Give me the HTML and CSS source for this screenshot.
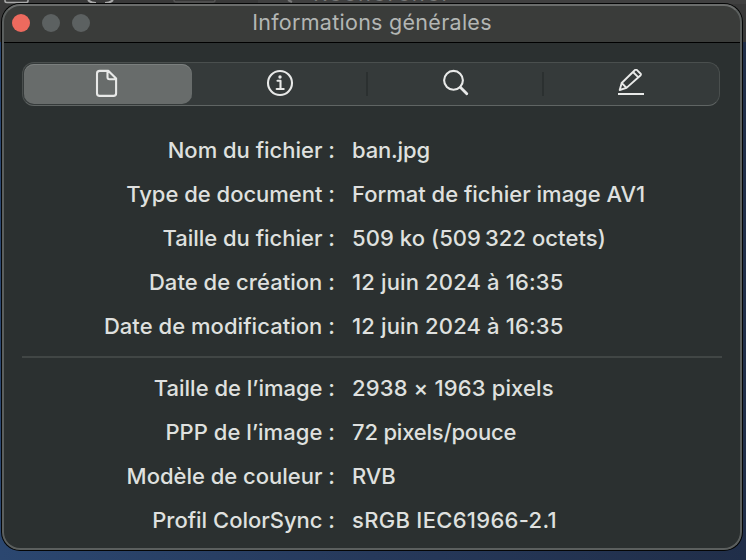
FILE: index.html
```html
<!DOCTYPE html>
<html lang="fr">
<head>
<meta charset="utf-8">
<title>Informations générales</title>
<link rel="stylesheet" href="styles.css">
</head>
<body>
<div class="backdrop" aria-hidden="true">
  <svg width="746" height="4" viewBox="0 0 746 4">
    <path d="M5 0v1q0 1.500 2 1.500h19q2 0 2-1.500V0" fill="none" stroke="#aaa" stroke-width="1.500"/>
    <path d="M88 0q3 3 8 3M113 0q-3 3-8 3" fill="none" stroke="#aaa" stroke-width="2"/>
    <path d="M174 0q0 2 2 2h37q2 0 2-2" fill="none" stroke="#555" stroke-width="1.500"/>
    <path d="M258 0h488v4H258z" fill="#484848" opacity=".5"/>
    <path d="M288 0l4 2" stroke="#777" stroke-width="2"/>
  </svg>
  <span class="behind">Rechercher</span>
</div>
<main class="window">
  <header class="titlebar">
    <div class="lights"><i class="light close"></i><i class="light"></i><i class="light"></i></div>
    <h1>Informations générales</h1>
  </header>
  <nav class="segments">
    <button class="segment active" aria-label="Général">
      <svg width="28" height="30" viewBox="0 0 28 30"><path d="M7 1.900h7.500l7.600 7.700v14.600q0 2.700-2.700 2.700H5.700Q3 26.900 3 24.200V4.600Q3 1.900 5.700 1.900H7M13.500 2.200v6q0 2 2 2h6.200"/></svg>
    </button>
    <button class="segment" aria-label="Informations">
      <svg width="28" height="30" viewBox="0 0 28 30"><circle cx="14" cy="14" r="12"/><path d="M11.500 11.800h3v8M10.700 20h7"/><circle class="dot" cx="14" cy="8" r="1.700"/></svg>
    </button>
    <button class="segment divided" aria-label="Rechercher">
      <svg width="28" height="30" viewBox="0 0 28 30"><circle cx="12.500" cy="11.300" r="9.400"/><path d="M19.300 18.200l6.500 6.600" stroke-width="2.800"/></svg>
    </button>
    <button class="segment divided" aria-label="Annotations">
      <svg width="28" height="30" viewBox="0 0 28 30"><path d="M1 25h26" stroke-linecap="butt"/><path d="M2.700 21l2-7L18 1q1-.9 2 .1l3.400 3.400q1 1 0 2L9.500 18.900zM16 3l5.400 5.400M4.700 14l4.800 4.800" stroke-width="1.900"/></svg>
    </button>
  </nav>
  <dl class="info">
    <dt>Nom du fichier :</dt><dd class="short">ban.jpg</dd>
    <dt>Type de document :</dt><dd>Format de fichier image AV1</dd>
    <dt>Taille du fichier :</dt><dd class="loose">509 ko (509&#8201;322 octets)</dd>
    <dt class="even">Date de création :</dt><dd class="digits">12 juin 2024 à 16:35</dd>
    <dt class="even">Date de modification :</dt><dd class="digits">12 juin 2024 à 16:35</dd>
  </dl>
  <hr>
  <dl class="info image-info">
    <dt>Taille de l’image :</dt><dd class="digits">2938 × 1963 pixels</dd>
    <dt class="even">PPP de l’image :</dt><dd class="tight">72 pixels/pouce</dd>
    <dt>Modèle de couleur :</dt><dd class="short">RVB</dd>
    <dt>Profil ColorSync :</dt><dd class="profile">sRGB IEC61966-2.1</dd>
  </dl>
</main>
</body>
</html>
```
FILE: styles.css
```css
* { box-sizing: border-box; }
body {
  margin: 0;
  width: 746px;
  height: 560px;
  overflow: hidden;
  position: relative;
  padding: 4px 0 0 2px;
  font-family: Inter, "Liberation Sans", sans-serif;
  color: #dfe0df;
  background: linear-gradient(90deg, #2b4770, #26395b 50%, #202e49);
}
.backdrop {
  position: absolute;
  inset: 0 0 auto;
  height: 42px;
  overflow: hidden;
  background: #393939;
}
.backdrop svg { display: block; }
.behind {
  position: absolute;
  left: 313px;
  top: -20px;
  font-size: 22px;
  line-height: 26px;
  letter-spacing: 1.900px;
  color: #777;
}
.window {
  position: relative;
  width: 740px;
  height: 546px;
  border-radius: 18px;
  background: #2b3030;
  box-shadow: 0 0 0 1px #050606;
  overflow: hidden;
}
.window::after {
  content: "";
  position: absolute;
  inset: 0;
  border: 2px solid #5b5f5e;
  border-top-color: #6b6d6c;
  border-radius: 18px;
  pointer-events: none;
}
.titlebar {
  height: 39px;
  display: grid;
  grid-template-columns: 80px 1fr 80px;
  align-items: center;
  background: #3a3c3a;
  border-bottom: 1px solid #000;
}
.lights { display: flex; gap: 12px; padding-left: 10px; }
.light { width: 18px; height: 18px; border-radius: 50%; background: #5c6161; flex: none; }
.close { background: #ed6a5e; }
h1 {
  margin: 0;
  padding-bottom: 2px;
  text-align: center;
  font-size: 21.500px;
  line-height: 28px;
  font-weight: 400;
  letter-spacing: 0.280px;
  color: #b3b6b4;
}
.segments {
  display: grid;
  grid-template-columns: 168px 174px 176px 176px;
  width: 698px;
  height: 44px;
  margin: 19px 0 0 20px;
  padding: 1px;
  border: 1px solid #4a4f4e;
  border-bottom-color: #606564;
  border-radius: 12px;
  background: #353a3a;
}
.segment {
  padding: 0 0 0 2px;
  border: 0;
  background: none;
  display: flex;
  align-items: center;
  justify-content: center;
}
.active {
  padding: 0;
  background: #686c6b;
  border-radius: 10px;
  box-shadow: inset 0 1px #7b7f7e;
}
.divided {
  background: linear-gradient(#2b3030, #2b3030) left center / 2px 24px no-repeat;
}
.segment svg { fill: none; stroke: #e8e9e8; stroke-width: 2.100; stroke-linecap: round; stroke-linejoin: round; }
.segment .dot { fill: #e8e9e8; stroke: none; }
.info {
  margin: 22px 0 0;
  display: grid;
  grid-template-columns: 333px 1fr;
  column-gap: 17px;
  grid-auto-rows: 44px;
  font-size: 22px;
  line-height: 44px;
  font-weight: 450;
  letter-spacing: -0.010px;
  white-space: nowrap;
}
dt { text-align: right; }
dd { margin: 0; }
.even { letter-spacing: 0.040px; }
.short { letter-spacing: -0.150px; }
.loose { letter-spacing: 0.070px; }
.digits { letter-spacing: 0.140px; }
.profile { letter-spacing: 0.300px; }
.tight { letter-spacing: -0.190px; }
hr { width: 700px; height: 2px; margin: 8px 0 0 20px; border: 0; background: #414645; }
.image-info { margin-top: 8px; }
```
